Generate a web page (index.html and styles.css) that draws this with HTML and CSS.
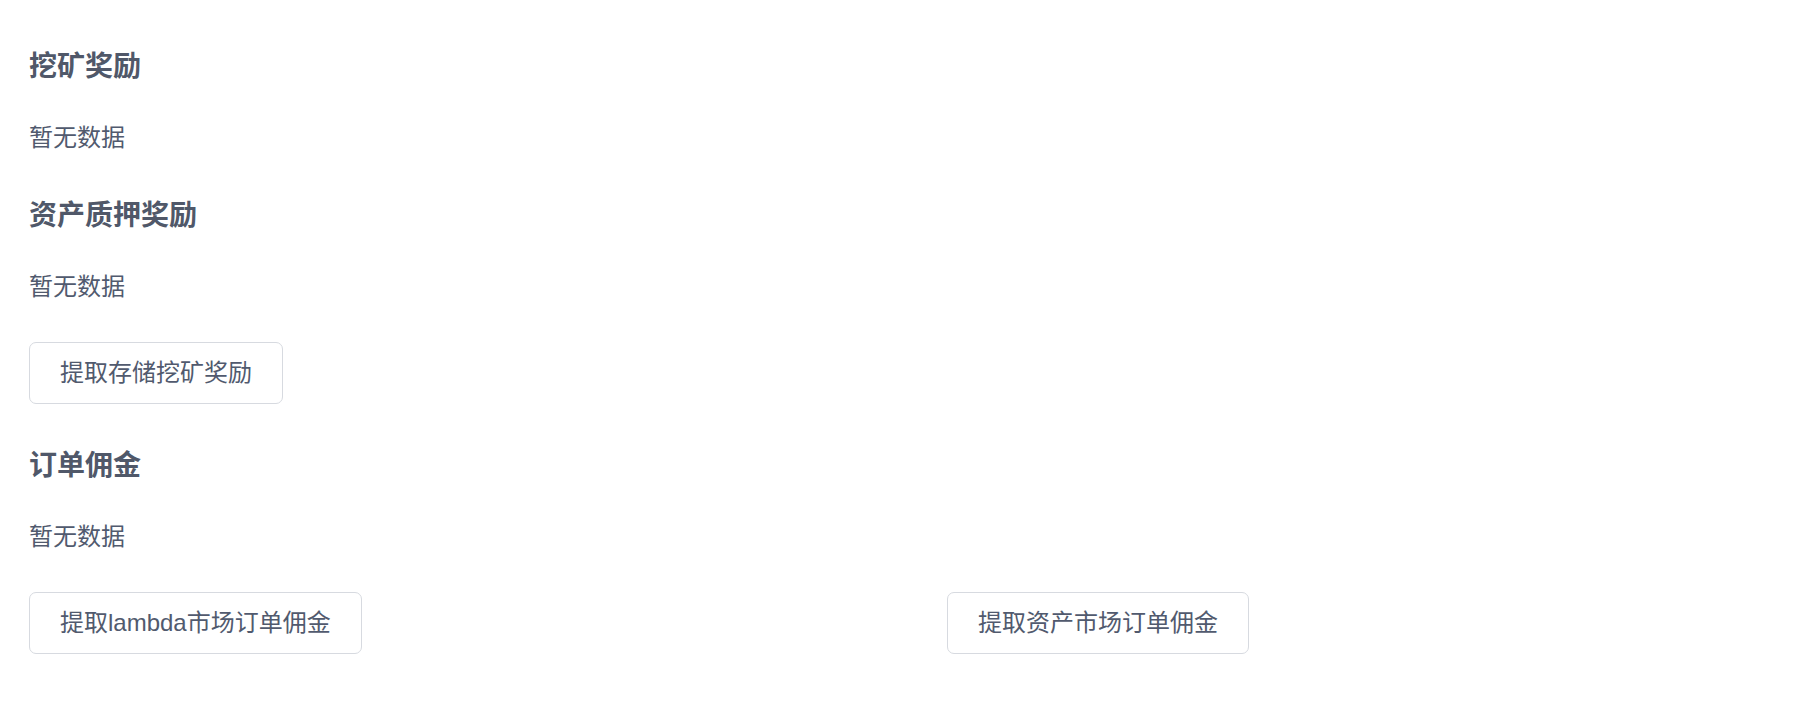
FILE: index.html
```html
<!DOCTYPE html>
<html lang="zh-CN">
<head>
<meta charset="utf-8">
<title>奖励</title>
<link rel="stylesheet" href="styles.css">
</head>
<body>
<div class="page">
  <h2 class="title">挖矿奖励</h2>
  <p class="empty">暂无数据</p>
  <h2 class="title">资产质押奖励</h2>
  <p class="empty">暂无数据</p>
  <div class="actions">
    <button class="btn">提取存储挖矿奖励</button>
  </div>
  <h2 class="title">订单佣金</h2>
  <p class="empty">暂无数据</p>
  <div class="actions row">
    <div class="col"><button class="btn">提取lambda市场订单佣金</button></div>
    <div class="col"><button class="btn">提取资产市场订单佣金</button></div>
  </div>
</div>
</body>
</html>
```
FILE: styles.css
```css
* { box-sizing: border-box; }
html, body { margin: 0; padding: 0; background: #fff; }
body {
  font-family: "Helvetica Neue", "Liberation Sans", "Noto Sans CJK SC", sans-serif;
  color: #515a6e;
}
.page {
  padding: 44px 29px 0 29px;
}
.title {
  margin: 0 0 33px 0;
  padding-top: 3px;
  font-size: 28px;
  line-height: 40px;
  font-weight: 600;
  color: #505869;
}
.empty {
  margin: 0 0 38px 0;
  padding-top: 1px;
  font-size: 24px;
  line-height: 34px;
}
.actions {
  margin-bottom: 39px;
}
.row {
  display: grid;
  grid-template-columns: 918px auto;
  justify-content: start;
}
.btn {
  height: 62px;
  padding: 0 30px;
  border: 1px solid #d7dae0;
  border-radius: 7px;
  background: #fff;
  color: #515a6e;
  font-family: inherit;
  font-size: 24px;
  line-height: 60px;
  cursor: pointer;
}
```
